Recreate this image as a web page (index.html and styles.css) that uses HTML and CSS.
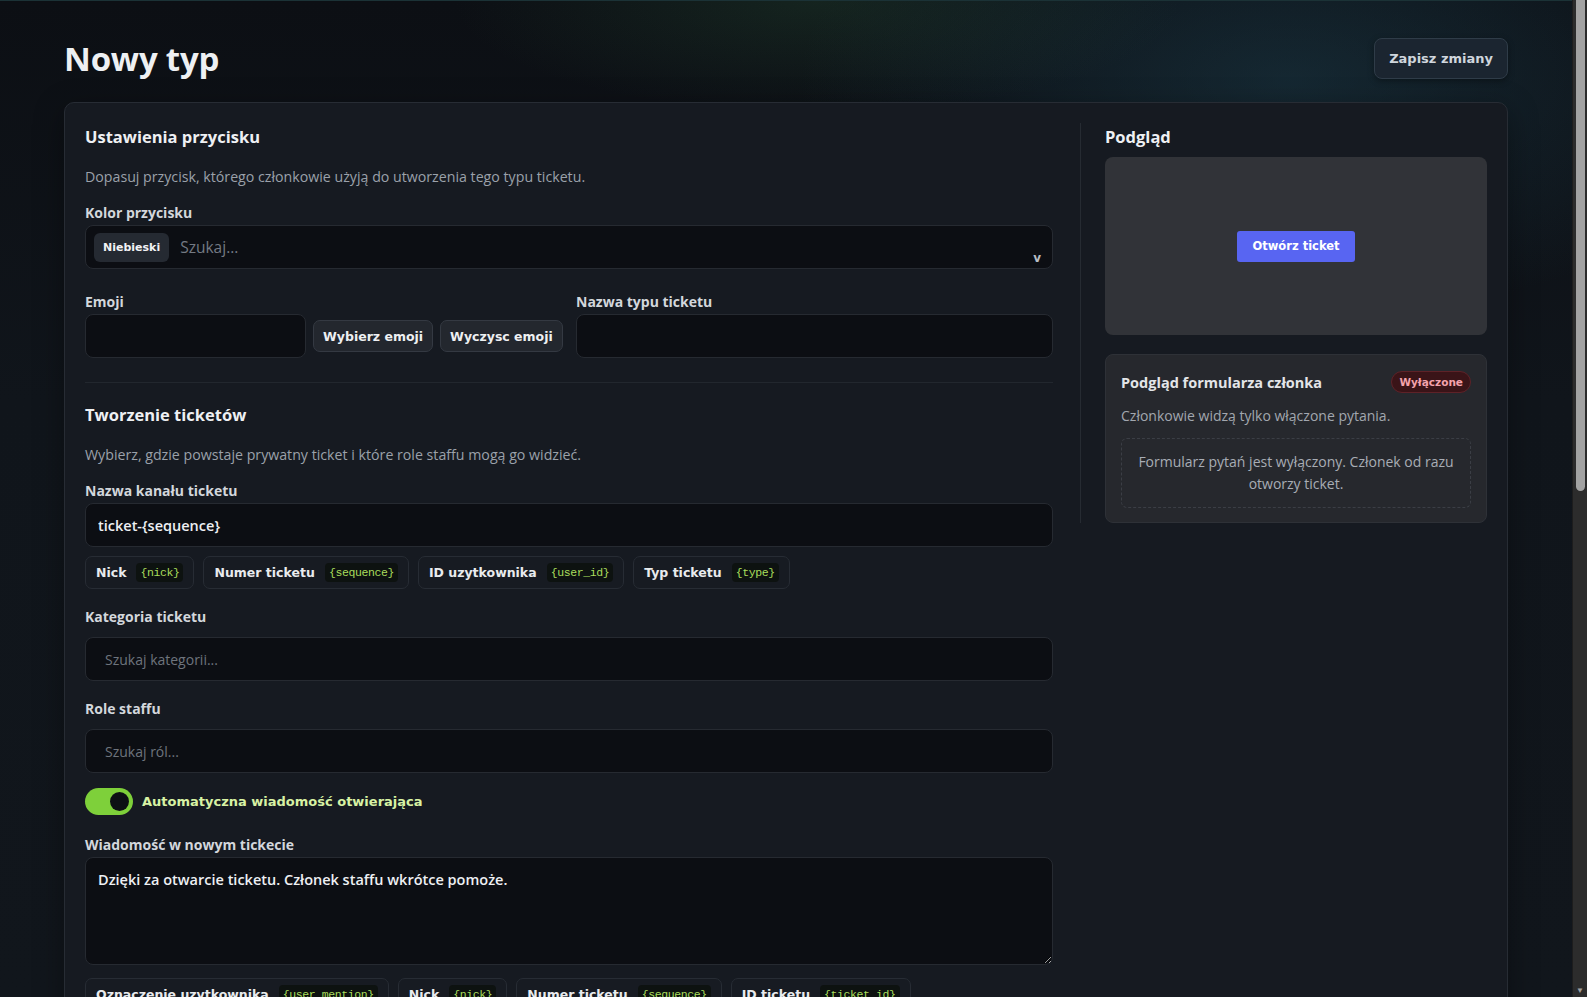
FILE: index.html
```html
<!DOCTYPE html>
<html lang="pl">
<head>
	<meta charset="UTF-8" />
	<meta name="viewport" content="width=device-width, initial-scale=1.0" />
	<title>Nowy typ</title>
	<link rel="stylesheet" href="styles.css">
</head>
<body>
	<div class="viewport">
		<div class="page">
			<header class="page-head">
				<h1>Nowy typ</h1>
				<button class="btn-save" type="button">Zapisz zmiany</button>
			</header>

			<section class="card">
				<div class="editor">
					<h2>Ustawienia przycisku</h2>
					<p class="hint">Dopasuj przycisk, którego członkowie użyją do utworzenia tego typu ticketu.</p>

					<label class="field-label">Kolor przycisku</label>
					<div class="select">
						<span class="select-tag">Niebieski</span>
						<span class="select-placeholder">Szukaj...</span>
						<span class="select-caret">v</span>
					</div>

					<div class="emoji-row">
						<div class="emoji-col">
							<label class="field-label">Emoji</label>
							<div class="emoji-controls">
								<input class="input emoji-input" type="text">
								<button class="btn-small" type="button">Wybierz emoji</button>
								<button class="btn-small" type="button">Wyczysc emoji</button>
							</div>
						</div>
						<div class="name-col">
							<label class="field-label">Nazwa typu ticketu</label>
							<input class="input" type="text">
						</div>
					</div>

					<hr class="sep">

					<h2>Tworzenie ticketów</h2>
					<p class="hint">Wybierz, gdzie powstaje prywatny ticket i które role staffu mogą go widzieć.</p>

					<label class="field-label">Nazwa kanału ticketu</label>
					<input class="input input-value" type="text" value="ticket-{sequence}">
					<div class="tokens">
						<span class="token">Nick <code>{nick}</code></span>
						<span class="token">Numer ticketu <code>{sequence}</code></span>
						<span class="token">ID uzytkownika <code>{user_id}</code></span>
						<span class="token">Typ ticketu <code>{type}</code></span>
					</div>

					<label class="field-label spaced">Kategoria ticketu</label>
					<input class="input input-search" type="text" placeholder="Szukaj kategorii...">

					<label class="field-label spaced">Role staffu</label>
					<input class="input input-search" type="text" placeholder="Szukaj ról...">

					<div class="toggle-row">
						<span class="toggle on"><span class="knob"></span></span>
						<span class="toggle-label">Automatyczna wiadomość otwierająca</span>
					</div>

					<label class="field-label">Wiadomość w nowym tickecie</label>
					<textarea class="input textarea">Dzięki za otwarcie ticketu. Członek staffu wkrótce pomoże.</textarea>
					<div class="tokens tokens-after-text">
						<span class="token">Oznaczenie uzytkownika <code>{user_mention}</code></span>
						<span class="token">Nick <code>{nick}</code></span>
						<span class="token">Numer ticketu <code>{sequence}</code></span>
						<span class="token">ID ticketu <code>{ticket_id}</code></span>
					</div>

					<hr class="sep">

					<h2>Formularz pytań</h2>
					<p class="hint">Zadaj członkowi pytania przed utworzeniem ticketu.</p>
					<div class="toggle-row">
						<span class="toggle"><span class="knob"></span></span>
						<span class="toggle-label off">Formularz pytań</span>
					</div>
				</div>

				<aside class="preview">
					<h2>Podgląd</h2>
					<div class="preview-stage">
						<button class="btn-discord" type="button">Otwórz ticket</button>
					</div>

					<div class="form-preview">
						<div class="form-preview-head">
							<span class="form-preview-title">Podgląd formularza członka</span>
							<span class="badge-off">Wyłączone</span>
						</div>
						<p class="form-preview-hint">Członkowie widzą tylko włączone pytania.</p>
						<div class="form-preview-empty">Formularz pytań jest wyłączony. Członek od razu otworzy ticket.</div>
					</div>
				</aside>
			</section>
		</div>
	</div>

	<div class="scrollbar">
		<div class="scrollbar-thumb"></div>
		<span class="scrollbar-arrow">&#9660;</span>
	</div>
</body>
</html>
```

FILE: styles.css
```css
:root {
	--bg: #0e1217;
	--card: #161a21;
	--card-border: #272c34;
	--field: #0c0e13;
	--field-border: #262a31;
	--text-1: #eef0f3;
	--text-2: #d3d7dc;
	--muted: #9ba1aa;
	--lime: #7ed03a;
	--code: #a9dd5c;
}

*,
*:after,
*:before {
	box-sizing: border-box;
}

body {
	margin: 0;
	display: flex;
	height: 100vh;
	overflow: hidden;
	font-family: 'Open Sans', 'Noto Sans', sans-serif;
	color: var(--text-1);
	background-color: var(--bg);
}

.viewport {
	flex: 1;
	min-width: 0;
	overflow: hidden;
	background:
		radial-gradient(ellipse 520px 160px at 52% 0%, rgba(52, 110, 70, 0.22), transparent 70%),
		radial-gradient(ellipse 700px 340px at 82% 8%, rgba(34, 78, 96, 0.38), transparent 70%),
		linear-gradient(180deg, #0c0f14 0%, #10151b 40%, #11161c 100%);
	border-top: 1px solid #1b3236;
}

/* fake window scrollbar */

.scrollbar {
	display: flex;
	flex-direction: column;
	align-items: center;
	width: 15px;
	padding: 0 3px 2px 3px;
	background: #2c2c2c;
	border-left: 1px solid #1d1d1d;
}

.scrollbar-thumb {
	width: 9px;
	height: 491px;
	border-radius: 0 0 5px 5px;
	background: #a3a3a3;
}

.scrollbar-arrow {
	margin-top: auto;
	font-size: 8px;
	line-height: 10px;
	color: #a3a3a3;
}

.page {
	padding: 37px 64px 40px;
}

.page-head {
	display: flex;
	align-items: center;
	justify-content: space-between;
	margin-bottom: 23px;
}

h1 {
	margin: 0;
	font-size: 33px;
	font-weight: 700;
	line-height: 41px;
	letter-spacing: -0.2px;
}

.btn-save {
	height: 41px;
	padding: 0 14px;
	border-radius: 8px;
	border: 1px solid #2f3c48;
	background: #1b2530;
	color: #cfd6dd;
	font-family: 'DejaVu Sans', sans-serif;
	font-weight: 700;
	font-size: 13px;
	box-shadow: 0 2px 6px rgba(0, 0, 0, 0.35);
}

.card {
	display: grid;
	grid-template-columns: 1fr 407px;
	column-gap: 27px;
	align-items: start;
	padding: 22px 20px 20px;
	min-height: 1890px;
	background: var(--card);
	border: 1px solid var(--card-border);
	border-radius: 10px;
	box-shadow: 0 8px 30px rgba(0, 0, 0, 0.35);
}

.editor {
	display: flex;
	flex-direction: column;
}

h2 {
	margin: 0 0 18px;
	font-size: 16.5px;
	line-height: 24px;
	font-weight: 700;
	color: var(--text-1);
}

.hint {
	margin: 0 0 17px;
	font-size: 14.2px;
	line-height: 20px;
	color: var(--muted);
}

.field-label {
	display: block;
	margin-bottom: 3px;
	font-size: 14px;
	line-height: 18px;
	font-weight: 700;
	color: var(--text-2);
}

.field-label.spaced {
	margin-bottom: 11px;
}

.select {
	display: flex;
	align-items: center;
	gap: 11px;
	height: 44px;
	padding: 0 8px;
	background: var(--field);
	border: 1px solid var(--field-border);
	border-radius: 8px;
}

.select-tag {
	padding: 8px 9px;
	border-radius: 6px;
	background: #252a32;
	color: #f2f3f5;
	font-family: 'DejaVu Sans', sans-serif;
	font-weight: 700;
	font-size: 11px;
}

.select-placeholder {
	flex: 1;
	font-size: 15.5px;
	color: #747a83;
}

.select-caret {
	align-self: flex-end;
	margin: 0 3px 3px 0;
	font-family: 'DejaVu Sans', sans-serif;
	font-weight: 700;
	font-size: 12px;
	color: #b7bcc3;
}

.input {
	display: block;
	width: 100%;
	height: 44px;
	padding: 0 12px;
	background: var(--field);
	border: 1px solid var(--field-border);
	border-radius: 8px;
	color: var(--text-1);
	font-family: inherit;
	font-size: 14px;
	outline: none;
}

.input-value {
	font-weight: 600;
	font-size: 14.5px;
}

.input-search {
	padding-left: 19px;
	margin-bottom: 19px;
}

.input-search::placeholder {
	color: #6e747d;
}

.emoji-row {
	display: grid;
	grid-template-columns: 479px 1fr;
	column-gap: 12px;
	margin-top: 24px;
}

.emoji-controls {
	display: flex;
	align-items: center;
	gap: 7px;
}

.emoji-input {
	width: 221px;
}

.btn-small {
	height: 32px;
	padding: 0 9px;
	border-radius: 7px;
	border: 1px solid #343942;
	background: #23272e;
	color: #eef0f2;
	font-family: 'DejaVu Sans', sans-serif;
	font-weight: 700;
	font-size: 12.5px;
	white-space: nowrap;
}

.sep {
	width: 100%;
	margin: 24px 0 20px;
	border: 0;
	border-top: 1px solid #22272e;
}

.tokens {
	display: flex;
	flex-wrap: wrap;
	gap: 9px;
	margin: 9px 0 19px;
}

.tokens-after-text {
	margin-top: 13px;
}

.token {
	display: inline-flex;
	align-items: center;
	gap: 10px;
	height: 33px;
	padding: 0 10px;
	border: 1px solid #272c34;
	border-radius: 7px;
	background: #171b22;
	color: #e9ebee;
	font-family: 'DejaVu Sans', sans-serif;
	font-weight: 700;
	font-size: 12.5px;
}

.token code {
	padding: 3px 4px;
	border-radius: 4px;
	background: #0d1210;
	color: var(--code);
	font-family: 'Liberation Mono', monospace;
	font-weight: 400;
	font-size: 11.5px;
	letter-spacing: -0.4px;
}

.toggle-row {
	display: flex;
	align-items: center;
	gap: 9px;
	margin: -4px 0 21px;
}

.toggle {
	position: relative;
	width: 48px;
	height: 27px;
	border-radius: 14px;
	background: #3a3f47;
}

.toggle.on {
	background: var(--lime);
}

.toggle .knob {
	position: absolute;
	top: 4px;
	left: 4px;
	width: 19px;
	height: 19px;
	border-radius: 50%;
	background: #0d1014;
}

.toggle.on .knob {
	left: auto;
	right: 4px;
}

.toggle-label {
	font-family: 'DejaVu Sans', sans-serif;
	font-weight: 700;
	font-size: 13px;
	color: #d8f2a4;
}

.toggle-label.off {
	color: var(--text-2);
}

.textarea {
	height: 108px;
	padding: 12px;
	resize: vertical;
	font-weight: 600;
	font-size: 14.5px;
	line-height: 20px;
}

/* right column */

.preview {
	display: flex;
	flex-direction: column;
	margin-top: -2px;
	padding-left: 24px;
	border-left: 1px solid #262b32;
}

.preview h2 {
	margin: 2px 0 8px;
}

.preview-stage {
	display: grid;
	place-items: center;
	height: 178px;
	margin-bottom: 19px;
	border-radius: 8px;
	background: #313338;
}

.btn-discord {
	height: 31px;
	padding: 0 15px;
	border: 0;
	border-radius: 3px;
	background: #5865f2;
	color: #fff;
	font-family: 'DejaVu Sans', sans-serif;
	font-weight: 700;
	font-size: 11.5px;
}

.form-preview {
	padding: 16px 15px 14px;
	border: 1px solid #2e3137;
	border-radius: 8px;
	background: #26282d;
}

.form-preview-head {
	display: flex;
	align-items: center;
	justify-content: space-between;
}

.form-preview-title {
	font-size: 14.5px;
	font-weight: 700;
	color: #e3e5e8;
}

.badge-off {
	padding: 4px 7px;
	border-radius: 999px;
	border: 1px solid #5e2228;
	background: #3a1418;
	color: #f4a3ad;
	font-family: 'DejaVu Sans', sans-serif;
	font-weight: 700;
	font-size: 10.5px;
}

.form-preview-hint {
	margin: 13px 0 13px;
	font-size: 14px;
	color: #a2a7af;
}

.form-preview-empty {
	padding: 12px 14px;
	border: 1px dashed #3b3e45;
	border-radius: 6px;
	text-align: center;
	font-size: 14px;
	line-height: 22px;
	color: #a8adb5;
}
```
